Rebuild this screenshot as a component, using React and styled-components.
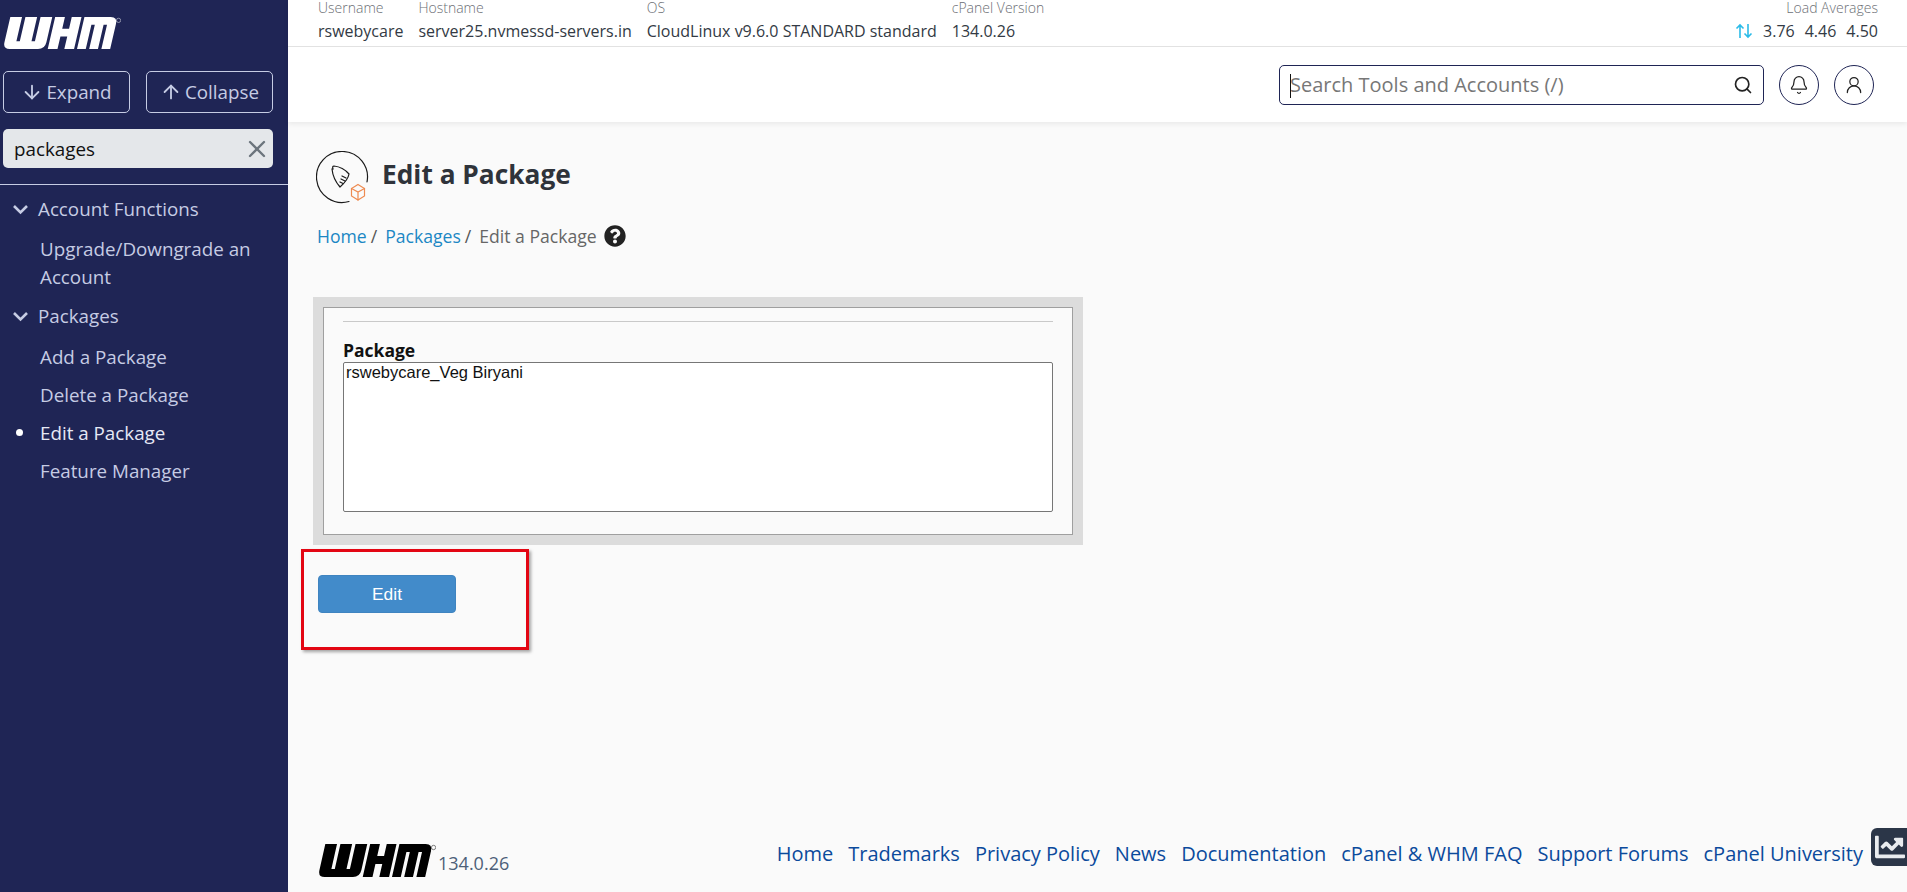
import React from 'react';
import styled, { createGlobalStyle } from 'styled-components';
import { ArrowDown, ArrowUp, X, Search, Bell, UserRound } from 'lucide-react';
import { FaChartLine, FaQuestionCircle } from 'react-icons/fa';

const GlobalStyle = createGlobalStyle`
  html, body {
    margin: 0;
    padding: 0;
    height: 100%;
    overflow: hidden;
    background: #fafafa;
    font-family: "Open Sans", "Liberation Sans", sans-serif;
  }
  #root { height: 100%; }
  * { box-sizing: border-box; }
`;

const Page = styled.div`
  display: flex;
  height: 892px;
  width: 1907px;
  overflow: hidden;
  position: relative;
`;

const Sidebar = styled.aside`
  width: 288px;
  flex: none;
  background: #1f2555;
  color: #c6cce4;
  display: flex;
  flex-direction: column;
`;

const LogoWrap = styled.div`
  padding: 17px 0 0 3px;
  height: 71px;
`;

const ToggleRow = styled.div`
  display: flex;
  gap: 16px;
  padding-left: 3px;
`;

const ToggleButton = styled.button`
  width: 127px;
  height: 42px;
  background: transparent;
  border: 1px solid #c6cce4;
  border-radius: 5px;
  color: #c6cce4;
  font: 18.8px "Open Sans", sans-serif;
  display: flex;
  align-items: center;
  justify-content: center;
  gap: 3px;
  padding: 0;
`;

const FilterBox = styled.div`
  margin: 16px 0 16px 3px;
  width: 270px;
  height: 39px;
  background: #e4e7ea;
  border-radius: 5px;
  display: flex;
  align-items: center;
  padding: 0 2px 0 11px;
  color: #6c757d;
`;

const FilterInput = styled.input`
  flex: 1;
  min-width: 0;
  border: none;
  outline: none;
  background: transparent;
  color: #111;
  font: 18.8px "Open Sans", sans-serif;
  padding: 0;
`;

const Divider = styled.div`
  height: 1px;
  background: #c6cce4;
`;

const Nav = styled.nav`
  display: flex;
  flex-direction: column;
  padding-top: 10px;
`;

const GroupTitle = styled.div`
  display: flex;
  align-items: center;
  height: 28px;
  margin: ${p => p.$top}px 0 ${p => p.$bottom}px 0;
  font-size: 18.8px;
  padding-left: 12px;
  gap: 9px;
`;

const NavItem = styled.a`
  position: relative;
  display: block;
  padding: 0 20px 0 40px;
  font-size: 18.8px;
  line-height: 28px;
  margin-bottom: 10px;
  color: ${p => (p.$active ? '#e6e9f5' : '#c6cce4')};
  &::before {
    content: ${p => (p.$active ? '""' : 'none')};
    position: absolute;
    left: 16px;
    top: 10px;
    width: 7px;
    height: 7px;
    border-radius: 50%;
    background: #fff;
  }
`;

const Main = styled.main`
  flex: 1;
  min-width: 0;
  display: flex;
  flex-direction: column;
`;

const Header = styled.header`
  background: #fff;
  height: 122px;
  flex: none;
  box-shadow: 0 2px 5px rgba(0, 0, 0, 0.07);
`;

const StatusBar = styled.div`
  height: 47px;
  border-bottom: 1px solid #e2e2e2;
  display: flex;
  justify-content: space-between;
  padding: 0 29px 0 30px;
`;

const StatusList = styled.div`
  display: flex;
  gap: 15px;
`;

const StatusItem = styled.div`
  display: flex;
  flex-direction: column;
  align-items: ${p => (p.$right ? 'flex-end' : 'flex-start')};
`;

const StatusLabel = styled.span`
  font-size: 14px;
  line-height: 16px;
  color: #6c6f75;
  font-weight: 300;
`;

const StatusValue = styled.span`
  display: flex;
  align-items: center;
  font-size: 16px;
  line-height: 22px;
  margin-top: 4px;
  color: #333a44;
  gap: 10px;
`;

const ToolRow = styled.div`
  height: 75px;
  display: flex;
  justify-content: flex-end;
  align-items: flex-start;
  padding: 18px 33px 0 0;
  gap: 15px;
`;

const SearchBox = styled.div`
  position: relative;
  width: 485px;
  height: 40px;
  border: 1px solid #1f2555;
  border-radius: 5px;
  display: flex;
  align-items: center;
  padding: 0 10px;
  color: #222;
`;

const SearchInput = styled.input`
  flex: 1;
  min-width: 0;
  border: none;
  outline: none;
  background: transparent;
  font: 20px "Open Sans", sans-serif;
  padding: 0 0 2px;
  &::placeholder {
    color: #777;
    opacity: 1;
  }
`;

const Caret = styled.span`
  position: absolute;
  left: 10px;
  top: 8px;
  width: 1px;
  height: 24px;
  background: #111;
`;

const RoundButton = styled.button`
  width: 40px;
  height: 40px;
  border: 1px solid #1f2555;
  border-radius: 50%;
  background: #fff;
  display: flex;
  align-items: center;
  justify-content: center;
  padding: 0;
  color: #222;
`;

const Content = styled.section`
  flex: 1;
  display: flex;
  flex-direction: column;
  padding: 29px 0 0 28px;
`;

const TitleRow = styled.div`
  display: flex;
  align-items: center;
  gap: 13px;
`;

const Title = styled.h1`
  margin: 0 0 7px;
  font-size: 26.3px;
  line-height: 45px;
  font-weight: 700;
  color: #2f333a;
`;

const Crumbs = styled.div`
  display: flex;
  align-items: center;
  margin: 19px 0 0 1px;
  font-size: 17.6px;
  line-height: 26px;
  color: #666;
`;

const CrumbLink = styled.a`
  color: #1b87c4;
`;

const Slash = styled.span`
  margin: 0 8px 0 4px;
  color: #555;
`;

const HelpIcon = styled.span`
  display: inline-flex;
  margin-left: 7px;
  color: #222;
`;

const FormFrame = styled.div`
  margin: 48px 0 0 -3px;
  width: 770px;
  height: 248px;
  background: #dcdcdc;
  padding: 10px;
`;

const FormInner = styled.div`
  height: 228px;
  background: #fafafa;
  border: 1px solid #9f9f9f;
  padding: 13px 19px 0;
`;

const Rule = styled.div`
  height: 1px;
  background: #c9c9c9;
`;

const FieldLabel = styled.label`
  display: block;
  margin-top: 16px;
  font-size: 17.5px;
  line-height: 24px;
  font-weight: 700;
  color: #111;
`;

const PackageSelect = styled.select`
  display: block;
  width: 710px;
  height: 150px;
  background: #fff;
  border: 1px solid #767676;
  border-radius: 2px;
  font: 16.5px "Liberation Sans", Arial, sans-serif;
  color: #111;
  padding: 0;
  outline: none;
  overflow: hidden;
`;

const ButtonRow = styled.div`
  position: relative;
  margin: 30px 0 0 2px;
`;

const EditButton = styled.button`
  display: block;
  width: 138px;
  height: 38px;
  background: #428bca;
  border: 1px solid #3f84c0;
  border-radius: 4px;
  color: #fff;
  font: 17.4px "Liberation Sans", Arial, sans-serif;
`;

/* red annotation drawn over the screenshot */
const Highlight = styled.div`
  position: absolute;
  left: -17px;
  top: -26px;
  width: 228px;
  height: 101px;
  border: 3px solid #e30613;
  box-shadow: 2px 2px 3px rgba(0, 0, 0, 0.35);
  pointer-events: none;
`;

const Footer = styled.footer`
  flex: none;
  height: 60px;
  display: flex;
  justify-content: space-between;
  padding: 0 44px 0 30px;
`;

const FooterBrand = styled.div`
  display: flex;
  align-items: flex-start;
  padding-top: 12px;
`;

const Version = styled.span`
  font-size: 18px;
  line-height: 24px;
  margin: 7px 0 0 2px;
  color: #4d5f78;
`;

const FooterLinks = styled.div`
  display: flex;
  gap: 15px;
  padding-top: 8px;
`;

const FooterLink = styled.a`
  font-size: 20px;
  line-height: 28px;
  color: #0b4a9c;
`;

const ChartTab = styled.div`
  position: absolute;
  right: 0;
  top: 828px;
  width: 36px;
  height: 38px;
  background: #2b3648;
  border-radius: 6px 0 0 6px;
  color: #e9ecef;
  display: flex;
  align-items: center;
  padding-left: 4px;
`;

const WhmLogo = ({ height, color }) => (
  <svg width="118" height={height} viewBox="0 0 121 33" preserveAspectRatio="none" fill={color}>
    <g transform="translate(7.500 0) skewX(-13)">
      <path d="M0 0h12v25h3.500V0h12v25h3.500V0h12v26q0 7-7 7H7q-7 0-7-7z" />
      <path d="M46 0h10v12h7V0h10v33H63V20h-7v13H46z" />
      <path d="M76 0H103q7 0 7 7V33H101V8H97.500V33H88.500V8H85V33H76z" />
    </g>
    <circle cx="118.500" cy="3.500" r="2.200" fill="none" stroke={color} strokeWidth="0.7" opacity="0.7" />
  </svg>
);

const MenuChevron = () => (
  <svg width="17" height="14" viewBox="0 0 17 14" fill="none" stroke="currentColor" strokeWidth="2.600">
    <path d="M2 4l6.500 6.500L15 4" />
  </svg>
);

const PackageIcon = () => (
  <svg width="53" height="53" viewBox="0 0 53 53" fill="none" stroke="#1a1a1a" strokeWidth="1.200" strokeLinecap="round">
    <path d="M33 50.500A25.500 25.500 0 1 1 51 31" />
    <path d="M17 18q-1-3 1-3q9 1 15 8q-1 6-9 13q-7-8-8-18z" />
    <path d="M26 25l4 2M25 28l4 2M24 31l3 1.500" />
    <g stroke="#ee8a50">
      <path d="M42 33.500l6.500 4v7.500l-6.500 4l-6.500-4v-7.500z" />
      <path d="M35.500 37.500l6.500 3.500l6.500-3.500M42 41v8" />
    </g>
  </svg>
);

const ReloadArrows = () => (
  <svg width="18" height="16" viewBox="0 0 18 16" fill="none" stroke="#2bbbe8" strokeWidth="1.600">
    <path d="M5 15V2M1.500 5.500L5 2l3.500 3.500" />
    <path d="M13 1v13M9.500 10.500L13 14l3.500-3.500" />
  </svg>
);

const statusItems = [
  ['Username', 'rswebycare'],
  ['Hostname', 'server25.nvmessd-servers.in'],
  ['OS', 'CloudLinux v9.6.0 STANDARD standard'],
  ['cPanel Version', '134.0.26'],
];

const footerLinks = ['Home', 'Trademarks', 'Privacy Policy', 'News', 'Documentation', 'cPanel & WHM FAQ', 'Support Forums', 'cPanel University'];

const App = () => {
  return (
    <Page>
      <GlobalStyle />
      <Sidebar>
        <LogoWrap>
          <WhmLogo height={32} color="#fff" />
        </LogoWrap>
        <ToggleRow>
          <ToggleButton><ArrowDown size={22} />Expand</ToggleButton>
          <ToggleButton><ArrowUp size={22} />Collapse</ToggleButton>
        </ToggleRow>
        <FilterBox>
          <FilterInput value="packages" readOnly />
          <X size={28} />
        </FilterBox>
        <Divider />
        <Nav>
          <GroupTitle $top={0} $bottom={12}><MenuChevron />Account Functions</GroupTitle>
          <NavItem>Upgrade/Downgrade an Account</NavItem>
          <GroupTitle $top={1} $bottom={13}><MenuChevron />Packages</GroupTitle>
          <NavItem>Add a Package</NavItem>
          <NavItem>Delete a Package</NavItem>
          <NavItem $active>Edit a Package</NavItem>
          <NavItem>Feature Manager</NavItem>
        </Nav>
      </Sidebar>
      <Main>
        <Header>
          <StatusBar>
            <StatusList>
              {statusItems.map(([label, value]) => (
                <StatusItem key={label}>
                  <StatusLabel>{label}</StatusLabel>
                  <StatusValue>{value}</StatusValue>
                </StatusItem>
              ))}
            </StatusList>
            <StatusItem $right>
              <StatusLabel>Load Averages</StatusLabel>
              <StatusValue>
                <ReloadArrows />
                <span>3.76</span>
                <span>4.46</span>
                <span>4.50</span>
              </StatusValue>
            </StatusItem>
          </StatusBar>
          <ToolRow>
            <SearchBox>
              <Caret />
              <SearchInput placeholder="Search Tools and Accounts (/)" readOnly />
              <Search size={20} />
            </SearchBox>
            <RoundButton aria-label="Notifications"><Bell size={20} strokeWidth={1.5} /></RoundButton>
            <RoundButton aria-label="Account"><UserRound size={20} strokeWidth={1.5} /></RoundButton>
          </ToolRow>
        </Header>
        <Content>
          <TitleRow>
            <PackageIcon />
            <Title>Edit a Package</Title>
          </TitleRow>
          <Crumbs>
            <CrumbLink>Home</CrumbLink><Slash>/</Slash>
            <CrumbLink>Packages</CrumbLink><Slash>/</Slash>
            <span>Edit a Package</span>
            <HelpIcon><FaQuestionCircle size={22} /></HelpIcon>
          </Crumbs>
          <FormFrame>
            <FormInner>
              <Rule />
              <FieldLabel>Package</FieldLabel>
              <PackageSelect multiple defaultValue={[]}>
                <option>rswebycare_Veg Biryani</option>
              </PackageSelect>
            </FormInner>
          </FormFrame>
          <ButtonRow>
            <EditButton>Edit</EditButton>
            <Highlight />
          </ButtonRow>
        </Content>
        <Footer>
          <FooterBrand>
            <WhmLogo height={33} color="#000" />
            <Version>134.0.26</Version>
          </FooterBrand>
          <FooterLinks>
            {footerLinks.map(link => <FooterLink key={link}>{link}</FooterLink>)}
          </FooterLinks>
        </Footer>
      </Main>
      <ChartTab><FaChartLine size={30} /></ChartTab>
    </Page>
  );
};

export default App;
